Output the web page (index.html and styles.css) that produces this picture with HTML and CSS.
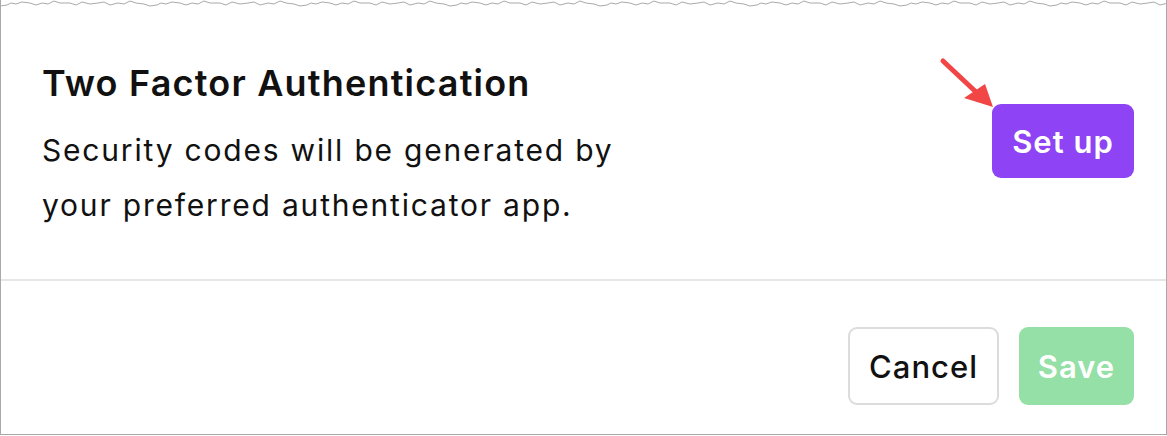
FILE: index.html
```html
<!DOCTYPE html>
<html lang="en">
  <head>
    <meta charset="UTF-8" />
    <meta name="viewport" content="width=device-width, initial-scale=1.0" />
    <title>Two Factor Authentication</title>
    <link rel="stylesheet" href="styles.css">
  </head>
  <body>
    <div class="card">
      <svg class="torn" width="1167" height="10" aria-hidden="true">
        <defs>
          <pattern id="tear" width="150" height="10" patternUnits="userSpaceOnUse">
            <polyline
              points="0,6 7,5 11,3 16,4 22,2 30,3 36,5 42,3 48,4 54,1 60,3 70,3 76,5 82,2 90,4 98,3 104,2 110,5 118,3 124,4 130,1 136,3 144,4 150,6"
              fill="none"
              stroke="#a9a9a9"
              stroke-width="1" />
          </pattern>
        </defs>
        <rect width="1167" height="10" fill="url(#tear)" />
      </svg>

      <div class="top">
        <div class="info">
          <h2>Two Factor Authentication</h2>
          <p>Security codes will be generated by<br />your preferred authenticator app.</p>
        </div>
        <div class="setup-wrap">
          <svg class="arrow" width="60" height="60" viewBox="0 0 60 60" aria-hidden="true">
            <line x1="5" y1="5" x2="38" y2="36" stroke="#f24646" stroke-width="5" stroke-linecap="round" />
            <polygon points="26,42 47,28 55,51" fill="#f24646" />
          </svg>
          <button class="setup">Set up</button>
        </div>
      </div>

      <div class="footer">
        <button class="cancel">Cancel</button>
        <button class="save">Save</button>
      </div>
    </div>
  </body>
</html>
```

FILE: styles.css
```css
body {
  margin: 0;
  background: #fff;
  font-family: Inter, "Noto Sans", sans-serif;
  color: #111;
}

.card {
  position: relative;
  width: 1167px;
  height: 435px;
  box-sizing: border-box;
  border: 1px solid #a9a9a9;
  border-top: none;
  background: #fff;
}

.torn {
  position: absolute;
  top: 0;
  left: -1px;
  display: block;
}

.top {
  display: flex;
  justify-content: space-between;
  align-items: flex-start;
  height: 281px;
  box-sizing: border-box;
  padding: 58px 32px 0 41px;
  border-bottom: 2px solid #e6e6ea;
}

.info h2 {
  margin: 0;
  font-size: 36px;
  font-weight: 600;
  line-height: 50px;
  letter-spacing: 1.2px;
}

.info p {
  margin: 15px 0 0;
  font-size: 30px;
  line-height: 55px;
  letter-spacing: 1.8px;
}

.setup-wrap {
  position: relative;
  margin-top: 46px;
}

.arrow {
  position: absolute;
  left: -54px;
  top: -48px;
}

button {
  font-family: inherit;
  font-weight: 600;
  font-size: 31px;
  letter-spacing: 1px;
  border-radius: 9px;
  cursor: pointer;
}

.setup {
  width: 142px;
  height: 74px;
  border: none;
  background: #8e44f4;
  color: #fff;
}

.footer {
  display: flex;
  justify-content: flex-end;
  gap: 20px;
  padding: 46px 32px 0;
}

.cancel {
  width: 151px;
  height: 78px;
  border: 2px solid #dcdcdc;
  background: #fff;
  color: #111;
  font-weight: 500;
}

.save {
  width: 115px;
  height: 78px;
  border: none;
  background: #95e0a6;
  color: #fff;
}
```
